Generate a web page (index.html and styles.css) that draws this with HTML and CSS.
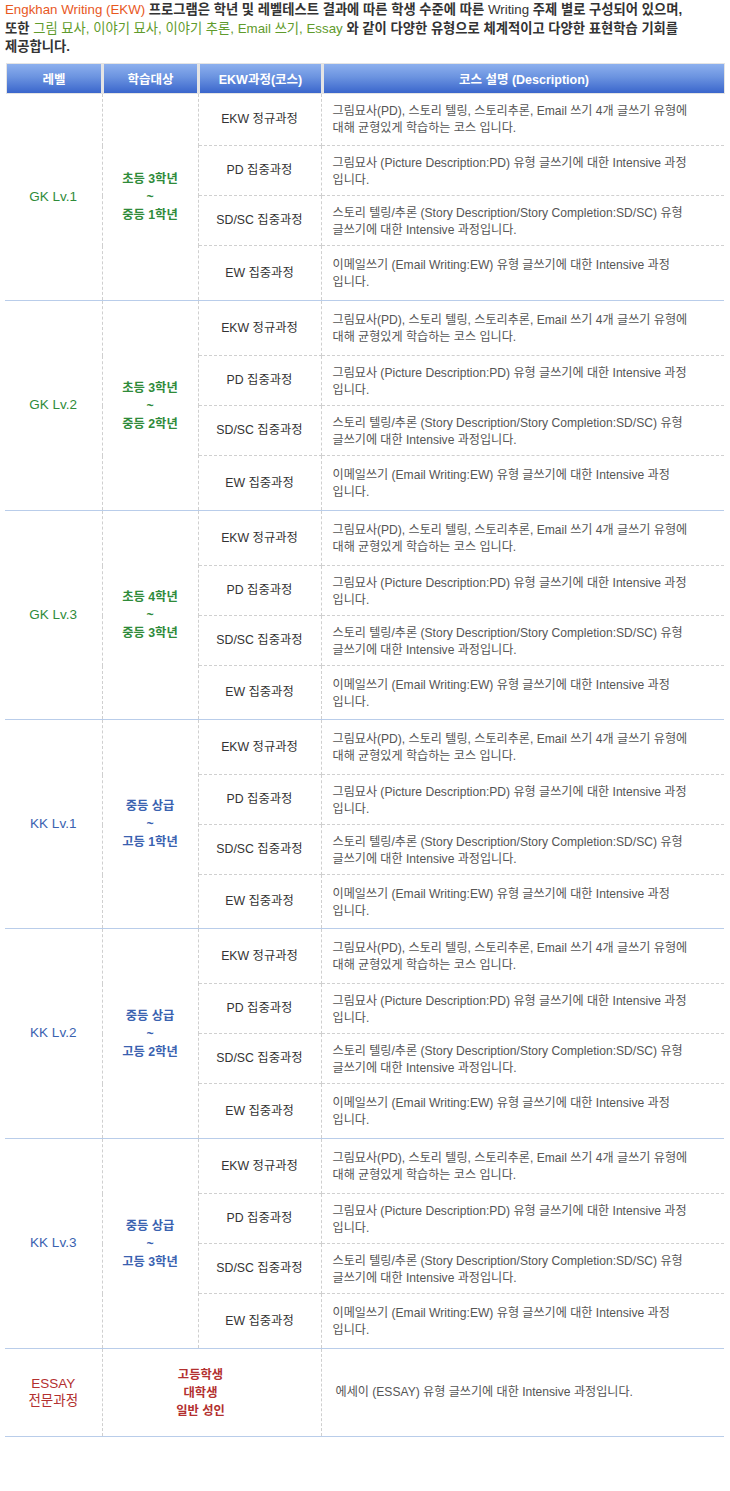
FILE: index.html
```html
<!DOCTYPE html>
<html lang="ko">
<head>
<meta charset="utf-8">
<link rel="stylesheet" href="styles.css">
</head>
<body>
<p class="intro"><span class="orange">Engkhan Writing (EKW)</span> 프로그램은 학년 및 레벨테스트 결과에 따른 학생 수준에 따른 <span class="latin">Writing</span> 주제 별로 구성되어 있으며,<br>또한 <span class="green">그림 묘사, 이야기 묘사, 이야기 추론, Email 쓰기, Essay</span> 와 같이 다양한 유형으로 체계적이고 다양한 표현학습 기회를<br>제공합니다.</p>

<div class="hdr">
  <div class="hc c1">레벨</div>
  <div class="hc c2">학습대상</div>
  <div class="hc c3">EKW과정(코스)</div>
  <div class="hc c4">코스 설명 (Description)</div>
</div>

<table class="tbl">
  <colgroup><col class="w1"><col class="w2"><col class="w3"><col class="w4"></colgroup>
  <tbody>
    <tr class="r first0">
      <td rowspan="4" class="lvl gk">GK Lv.1</td>
      <td rowspan="4" class="tgt gk">초등 3학년<br>~<br>중등 1학년</td>
      <td class="crs">EKW 정규과정</td>
      <td class="dsc">그림묘사(PD), 스토리 텔링, 스토리추론, Email 쓰기 4개 글쓰기 유형에<br>대해 균형있게 학습하는 코스 입니다.</td>
    </tr>
    <tr class="r mid"><td class="crs">PD 집중과정</td><td class="dsc">그림묘사 (Picture Description:PD) 유형 글쓰기에 대한 Intensive 과정<br>입니다.</td></tr>
    <tr class="r mid"><td class="crs">SD/SC 집중과정</td><td class="dsc">스토리 텔링/추론 (Story Description/Story Completion:SD/SC) 유형<br>글쓰기에 대한 Intensive 과정입니다.</td></tr>
    <tr class="r last"><td class="crs">EW 집중과정</td><td class="dsc">이메일쓰기 (Email Writing:EW) 유형 글쓰기에 대한 Intensive 과정<br>입니다.</td></tr>

    <tr class="r first">
      <td rowspan="4" class="lvl gk">GK Lv.2</td>
      <td rowspan="4" class="tgt gk">초등 3학년<br>~<br>중등 2학년</td>
      <td class="crs">EKW 정규과정</td>
      <td class="dsc">그림묘사(PD), 스토리 텔링, 스토리추론, Email 쓰기 4개 글쓰기 유형에<br>대해 균형있게 학습하는 코스 입니다.</td>
    </tr>
    <tr class="r mid"><td class="crs">PD 집중과정</td><td class="dsc">그림묘사 (Picture Description:PD) 유형 글쓰기에 대한 Intensive 과정<br>입니다.</td></tr>
    <tr class="r mid"><td class="crs">SD/SC 집중과정</td><td class="dsc">스토리 텔링/추론 (Story Description/Story Completion:SD/SC) 유형<br>글쓰기에 대한 Intensive 과정입니다.</td></tr>
    <tr class="r last"><td class="crs">EW 집중과정</td><td class="dsc">이메일쓰기 (Email Writing:EW) 유형 글쓰기에 대한 Intensive 과정<br>입니다.</td></tr>

    <tr class="r first">
      <td rowspan="4" class="lvl gk">GK Lv.3</td>
      <td rowspan="4" class="tgt gk">초등 4학년<br>~<br>중등 3학년</td>
      <td class="crs">EKW 정규과정</td>
      <td class="dsc">그림묘사(PD), 스토리 텔링, 스토리추론, Email 쓰기 4개 글쓰기 유형에<br>대해 균형있게 학습하는 코스 입니다.</td>
    </tr>
    <tr class="r mid"><td class="crs">PD 집중과정</td><td class="dsc">그림묘사 (Picture Description:PD) 유형 글쓰기에 대한 Intensive 과정<br>입니다.</td></tr>
    <tr class="r mid"><td class="crs">SD/SC 집중과정</td><td class="dsc">스토리 텔링/추론 (Story Description/Story Completion:SD/SC) 유형<br>글쓰기에 대한 Intensive 과정입니다.</td></tr>
    <tr class="r last short"><td class="crs">EW 집중과정</td><td class="dsc">이메일쓰기 (Email Writing:EW) 유형 글쓰기에 대한 Intensive 과정<br>입니다.</td></tr>

    <tr class="r first">
      <td rowspan="4" class="lvl kk">KK Lv.1</td>
      <td rowspan="4" class="tgt kk">중등 상급<br>~<br>고등 1학년</td>
      <td class="crs">EKW 정규과정</td>
      <td class="dsc">그림묘사(PD), 스토리 텔링, 스토리추론, Email 쓰기 4개 글쓰기 유형에<br>대해 균형있게 학습하는 코스 입니다.</td>
    </tr>
    <tr class="r mid"><td class="crs">PD 집중과정</td><td class="dsc">그림묘사 (Picture Description:PD) 유형 글쓰기에 대한 Intensive 과정<br>입니다.</td></tr>
    <tr class="r mid"><td class="crs">SD/SC 집중과정</td><td class="dsc">스토리 텔링/추론 (Story Description/Story Completion:SD/SC) 유형<br>글쓰기에 대한 Intensive 과정입니다.</td></tr>
    <tr class="r last short"><td class="crs">EW 집중과정</td><td class="dsc">이메일쓰기 (Email Writing:EW) 유형 글쓰기에 대한 Intensive 과정<br>입니다.</td></tr>

    <tr class="r first">
      <td rowspan="4" class="lvl kk">KK Lv.2</td>
      <td rowspan="4" class="tgt kk">중등 상급<br>~<br>고등 2학년</td>
      <td class="crs">EKW 정규과정</td>
      <td class="dsc">그림묘사(PD), 스토리 텔링, 스토리추론, Email 쓰기 4개 글쓰기 유형에<br>대해 균형있게 학습하는 코스 입니다.</td>
    </tr>
    <tr class="r mid"><td class="crs">PD 집중과정</td><td class="dsc">그림묘사 (Picture Description:PD) 유형 글쓰기에 대한 Intensive 과정<br>입니다.</td></tr>
    <tr class="r mid"><td class="crs">SD/SC 집중과정</td><td class="dsc">스토리 텔링/추론 (Story Description/Story Completion:SD/SC) 유형<br>글쓰기에 대한 Intensive 과정입니다.</td></tr>
    <tr class="r last"><td class="crs">EW 집중과정</td><td class="dsc">이메일쓰기 (Email Writing:EW) 유형 글쓰기에 대한 Intensive 과정<br>입니다.</td></tr>

    <tr class="r first">
      <td rowspan="4" class="lvl kk">KK Lv.3</td>
      <td rowspan="4" class="tgt kk">중등 상급<br>~<br>고등 3학년</td>
      <td class="crs">EKW 정규과정</td>
      <td class="dsc">그림묘사(PD), 스토리 텔링, 스토리추론, Email 쓰기 4개 글쓰기 유형에<br>대해 균형있게 학습하는 코스 입니다.</td>
    </tr>
    <tr class="r mid"><td class="crs">PD 집중과정</td><td class="dsc">그림묘사 (Picture Description:PD) 유형 글쓰기에 대한 Intensive 과정<br>입니다.</td></tr>
    <tr class="r mid"><td class="crs">SD/SC 집중과정</td><td class="dsc">스토리 텔링/추론 (Story Description/Story Completion:SD/SC) 유형<br>글쓰기에 대한 Intensive 과정입니다.</td></tr>
    <tr class="r last"><td class="crs">EW 집중과정</td><td class="dsc">이메일쓰기 (Email Writing:EW) 유형 글쓰기에 대한 Intensive 과정<br>입니다.</td></tr>

    <tr class="r essay">
      <td class="lvl es">ESSAY<br>전문과정</td>
      <td colspan="2" class="tgt es merged">고등학생<br>대학생<br>일반 성인</td>
      <td class="dsc dsc-es">에세이 (ESSAY) 유형 글쓰기에 대한 Intensive 과정입니다.</td>
    </tr>
  </tbody>
</table>
</body>
</html>
```

FILE: styles.css
```css
html, body {
  margin: 0;
  padding: 0;
  background: #ffffff;
}

body {
  font-family: "Liberation Sans", "Noto Sans CJK KR", sans-serif;
  color: #333333;
}

.intro {
  margin: 0;
  padding: 1px 0 0 5px;
  font-size: 13.3px;
  line-height: 18.5px;
  font-weight: bold;
  color: #333333;
}

.orange {
  color: #e8581e;
  font-weight: normal;
}

.green {
  color: #5f9b2c;
  font-weight: normal;
}

.latin {
  font-weight: normal;
}

.hdr {
  display: flex;
  gap: 3px;
  width: 717px;
  margin: 6px 0 0 6px;
  padding: 1px;
  background: #e4e4e4;
}

.hc {
  height: 29px;
  display: flex;
  align-items: center;
  justify-content: center;
  color: #ffffff;
  font-size: 12.5px;
  font-weight: bold;
  background: linear-gradient(#8db0ee 0%, #6b93e0 45%, #3a66cc 100%);
}

.c1 { width: 94px; }
.c2 { width: 93px; }
.c3 { width: 121px; }
.c4 { width: 400px; }

.tbl {
  margin-left: 5px;
  width: 719px;
  table-layout: fixed;
  border-collapse: collapse;
}

.w1 { width: 97px; }
.w2 { width: 96px; }
.w3 { width: 123px; }
.w4 { width: 403px; }

.tbl td {
  padding: 0;
  vertical-align: middle;
  text-align: center;
  font-size: 12.3px;
  line-height: 16.5px;
}

.tbl .lvl,
.tbl .tgt,
.tbl .crs {
  border-right: 1px dashed #cfcfcf;
}

.tbl .crs,
.tbl .dsc {
  border-bottom: 1px dashed #d0d0d0;
}

.r.first0 { height: 52px; }
.r.first { height: 55px; }
.r.mid { height: 50px; }
.r.last { height: 55px; }
.r.last.short { height: 54px; }

.tbl .r.last td,
.tbl .lvl,
.tbl .tgt {
  border-bottom: 1px solid #b9cdea;
}

.tbl .lvl {
  font-size: 13.5px;
}

.tbl .tgt {
  font-weight: bold;
  line-height: 18px;
}

.tbl .crs {
  color: #333333;
}

.tbl .dsc {
  text-align: left;
  padding-left: 11px;
  font-size: 12.1px;
  line-height: 17px;
  padding-top: 2px;
  color: #555555;
}

.gk { color: #2f8b3a; }
.kk { color: #3a62b0; }
.es { color: #b3302f; }

.r.essay { height: 88px; }
.tbl .r.essay td { border-bottom: 1px solid #b9cdea; }

.tbl .merged {
  padding-right: 22px;
}

.tbl .dsc-es {
  padding-left: 14px;
  padding-top: 0;
}
```
